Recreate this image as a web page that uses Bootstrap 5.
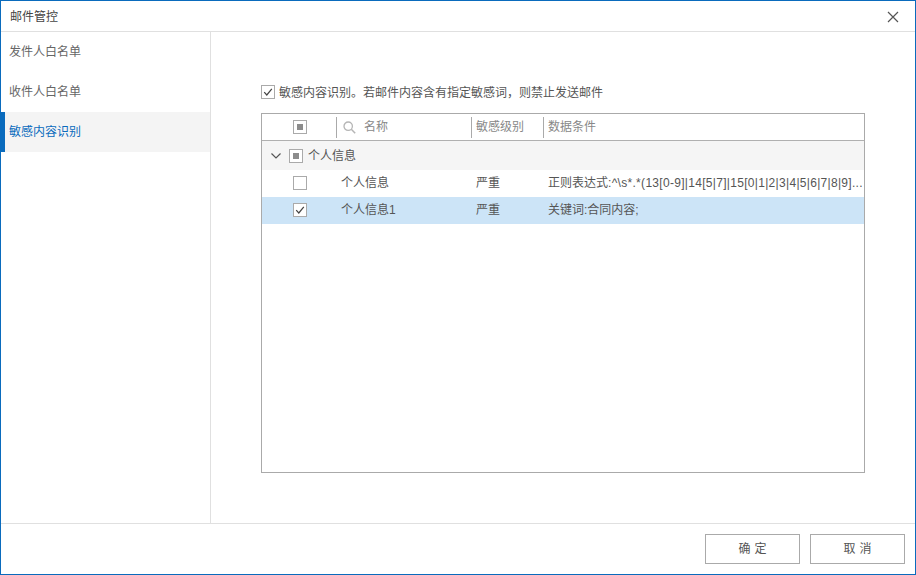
<!DOCTYPE html>
<html lang="zh-CN">
<head>
<meta charset="utf-8">
<title>邮件管控</title>
<link href="https://cdn.jsdelivr.net/npm/bootstrap@5.3.0/dist/css/bootstrap.min.css" rel="stylesheet">
<style>
html,body{height:100%;margin:0;background:#fff}
body{font-family:"Liberation Sans","Noto Sans CJK SC",sans-serif;font-size:12px;line-height:16px;color:#555}
.win{height:575px;width:916px;border:1px solid #0a6bbd}
.titlebar{height:31px;border-bottom:1px solid #e0e0e0;padding:1px 8px 0 9px;color:#444}
.closex{width:12px;height:12px;background:none;border:0;padding:0;display:block;margin-right:8px}
.body-area{height:491px}
.side{width:210px;border-right:1px solid #e0e0e0;flex:none}
.side-item{height:40px;padding-left:8px;padding-bottom:1px;color:#666}
.side-item.on{background:#f4f4f4;color:#0a6bbd;border-left:4px solid #0a6bbd;padding-left:4px}
.main-pane{padding:52px 0 0 50px}
.cb{width:14px;height:14px;border:1px solid #aaa;background:#fff;flex:none;display:flex;align-items:center;justify-content:center}
.cb i{display:block;width:6px;height:6px;background:#8c8c8c}
.optline{height:16px;gap:4px;margin-bottom:13px;color:#555}
.opt-txt{padding-top:1px}
.grid-box{width:604px;height:360px;border:1px solid #aaa}
.r{display:flex;align-items:center}
.r-head{height:27px;border-bottom:1px solid #b0b0b0;color:#888}
.r-group{height:29px;background:#f5f5f5;color:#555}
.r-row{height:27px;color:#555;padding-bottom:1px}
.r-row.sel{background:#cce4f7}
.c1{width:74px;flex:none;display:flex;justify-content:center;padding-left:1px}
.c2{width:135px;flex:none}
.c3{width:72px;flex:none}
.c4{flex:1 1 0;min-width:0;white-space:nowrap}
.rx{letter-spacing:.3px}
.r-head .c2,.r-head .c3,.r-head .c4{height:21px;border-left:1px solid #aaa;display:flex;align-items:center}
.r-head .c2{padding-left:6px;gap:8px}
.r-head .c3,.r-head .c4{padding-left:4px}
.r-row .c2,.r-row .c3,.r-row .c4{padding-left:5px}
.r-group .chev{margin-left:9px;margin-right:8px;display:block}
.r-group .lbl{margin-left:5px}
.foot{height:51px;border-top:1px solid #e0e0e0;padding:10px 10px 0 0;gap:10px}
.dlg-btn{width:95px;height:30px;border:1px solid #aaa;background:#fff;border-radius:0;color:#555;font-size:12px;line-height:16px;padding:0;letter-spacing:4px;text-indent:4px}
</style>
</head>
<body>
<div class="win d-flex flex-column">
  <div class="titlebar d-flex align-items-center justify-content-between">
    <span>邮件管控</span>
    <button class="closex" type="button" aria-label="关闭"><svg width="12" height="12" viewBox="0 0 12 12" class="d-block"><path d="M1 1 11 11M11 1 1 11" stroke="#555" stroke-width="1.2" fill="none"/></svg></button>
  </div>
  <div class="body-area d-flex">
    <div class="side">
      <div class="side-item d-flex align-items-center">发件人白名单</div>
      <div class="side-item d-flex align-items-center">收件人白名单</div>
      <div class="side-item on d-flex align-items-center">敏感内容识别</div>
    </div>
    <div class="main-pane flex-grow-1">
      <div class="optline d-flex align-items-center">
        <span class="cb"><svg width="10" height="10" viewBox="0 0 10 10"><path d="M1.2 5.200 3.800 8 8.800 1.800" stroke="#444" stroke-width="1.2" fill="none"/></svg></span>
        <span class="opt-txt">敏感内容识别。若邮件内容含有指定敏感词，则禁止发送邮件</span>
      </div>
      <div class="grid-box">
        <div class="r r-head">
          <div class="c1"><span class="cb"><i></i></span></div>
          <div class="c2"><svg width="13" height="13" viewBox="0 0 13 13"><circle cx="5.2" cy="5.2" r="4.2" stroke="#b5b5b5" stroke-width="1.3" fill="none"/><path d="M8.300 8.300 12.200 12.200" stroke="#b5b5b5" stroke-width="1.5"/></svg><span>名称</span></div>
          <div class="c3">敏感级别</div>
          <div class="c4">数据条件</div>
        </div>
        <div class="r r-group">
          <svg class="chev" width="10" height="6" viewBox="0 0 10 6"><path d="M.5.5 5 5 9.500.5" stroke="#555" stroke-width="1.2" fill="none"/></svg>
          <span class="cb"><i></i></span>
          <span class="lbl">个人信息</span>
        </div>
        <div class="r r-row">
          <div class="c1"><span class="cb"></span></div>
          <div class="c2">个人信息</div>
          <div class="c3">严重</div>
          <div class="c4">正则表达式<span class="rx">:^\s*.*(13[0-9]|14[5|7]|15[0|1|2|3|4|5|6|7|8|9]...</span></div>
        </div>
        <div class="r r-row sel">
          <div class="c1"><span class="cb"><svg width="10" height="10" viewBox="0 0 10 10"><path d="M1.200 5.200 3.800 8 8.800 1.800" stroke="#444" stroke-width="1.200" fill="none"/></svg></span></div>
          <div class="c2">个人信息1</div>
          <div class="c3">严重</div>
          <div class="c4">关键词:合同内容;</div>
        </div>
      </div>
    </div>
  </div>
  <div class="foot d-flex justify-content-end align-items-start">
    <button class="dlg-btn" type="button">确定</button>
    <button class="dlg-btn" type="button">取消</button>
  </div>
</div>
</body>
</html>
